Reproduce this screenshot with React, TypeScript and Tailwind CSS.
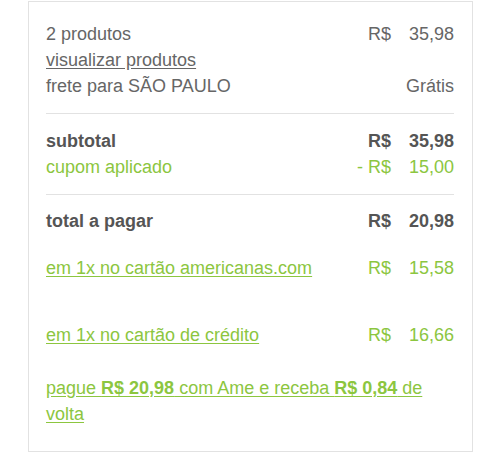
import React from 'react';

type Row = { label: React.ReactNode; prefix?: string; value?: string; className?: string };

const Price: React.FC<{ prefix?: string; value?: string }> = ({ prefix, value }) => (
  <div className="flex shrink-0 items-baseline">
    <span className="text-right">{prefix}</span>
    <span className="w-[63px] text-right">{value}</span>
  </div>
);

const Line: React.FC<Row> = ({ label, prefix, value, className }) => (
  <div className={`flex items-baseline justify-between ${className ?? ''}`}>
    <div>{label}</div>
    {(prefix || value) && <Price prefix={prefix} value={value} />}
  </div>
);

const App: React.FC = () => {
  return (
    <div
      className="h-[455px] w-[500px] bg-white"
      style={{ fontFamily: '"Liberation Sans", Arial, sans-serif' }}
    >
      <div className="ml-[28px] mt-[1px] h-[451px] w-[445px] border border-[#e2e2e2] pl-[17px] pr-[18px] pt-[19px] text-[18px] leading-[26px] text-[#666]">
        <div className="pb-[14px]">
          <Line label="2 produtos" prefix="R$" value="35,98" />
          <Line label={<span className="underline underline-offset-2">visualizar produtos</span>} />
          <Line label="frete para SÃO PAULO" value="Grátis" />
        </div>
        <div className="border-t border-[#e2e2e2] pb-[14px] pt-[14px]">
          <Line label="subtotal" prefix="R$" value="35,98" className="font-bold text-[#555]" />
          <Line label="cupom aplicado" prefix="- R$" value="15,00" className="text-[#8cc63f]" />
        </div>
        <div className="border-t border-[#e2e2e2] pt-[13px] text-[#8cc63f]">
          <Line label="total a pagar" prefix="R$" value="20,98" className="font-bold text-[#555]" />
          <Line
            label={<span className="underline underline-offset-2">em 1x no cartão americanas.com</span>}
            prefix="R$"
            value="15,58"
            className="mt-[21px]"
          />
          <Line
            label={<span className="underline underline-offset-2">em 1x no cartão de crédito</span>}
            prefix="R$"
            value="16,66"
            className="mt-[41px]"
          />
          <p className="mt-[27px] pr-[14px] underline underline-offset-2">
            pague <b>R$ 20,98</b> com Ame e receba <b>R$ 0,84</b> de volta
          </p>
        </div>
      </div>
    </div>
  );
};

export default App;
